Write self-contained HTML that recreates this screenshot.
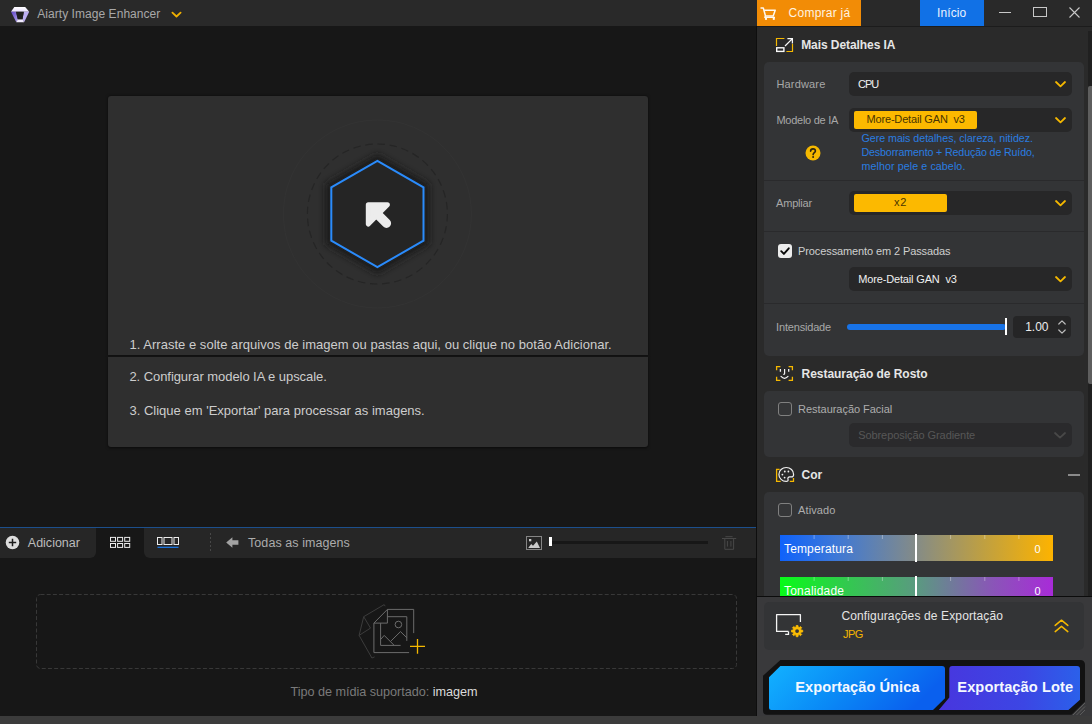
<!DOCTYPE html>
<html><head><meta charset="utf-8"><title>Aiarty Image Enhancer</title>
<style>
*{margin:0;padding:0;box-sizing:border-box}
html,body{width:1092px;height:724px;overflow:hidden;background:#171717;font-family:"Liberation Sans",sans-serif}
body{position:relative}
.a{position:absolute}
.t{position:absolute;white-space:nowrap;font-family:"Liberation Sans",sans-serif}
.card{position:absolute;left:764px;width:320px;background:#333436;border-radius:5px}
.dd{position:absolute;left:849px;width:223px;height:24px;background:#272728;border-radius:5px}
.sep{position:absolute;left:764px;width:320px;height:1px;background:#2a2a2c}
svg{position:absolute;overflow:visible}

</style></head>
<body>
<!-- title bar -->
<div class="a" style="left:0;top:0;width:1092px;height:26px;background:#292929"></div>
<!-- logo -->
<svg style="left:10px;top:6px" width="20" height="17" viewBox="0 0 20 17">
  <defs>
    <linearGradient id="lg1" x1="0" y1="0" x2="0" y2="1"><stop offset="0" stop-color="#ffffff"/><stop offset="1" stop-color="#e9e0ff"/></linearGradient>
    <linearGradient id="lg2" x1="0" y1="0" x2="1" y2="1"><stop offset="0" stop-color="#5d43c4"/><stop offset="1" stop-color="#b3a3ee"/></linearGradient>
  </defs>
  <path d="M4.300 1 H15.200 L19.200 5.800 H1 Z" fill="url(#lg1)"/>
  <path d="M1 5.800 H6 L7.800 13.300 L6.300 16.200 Z" fill="url(#lg2)"/>
  <path d="M19.200 5.800 H13.800 L12.500 13.300 L14.100 16.200 Z" fill="#bcaef2"/>
  <path d="M7.800 13.300 H12.500 L14.100 16.200 H6.300 Z" fill="#f1ebff"/>
  <path d="M6 5.800 H13.800 L12.500 13.300 H7.800 Z" fill="#1f1f1f"/>
</svg>
<!-- title chevron -->
<svg style="left:171px;top:11px" width="11" height="7" viewBox="0 0 11 7"><path d="M1.4 1.7 L5.5 5.5 L9.600 1.700" fill="none" stroke="#f0b000" stroke-width="1.8" stroke-linecap="round" stroke-linejoin="round"/></svg>
<!-- buy button -->
<div class="a" style="left:757px;top:0;width:104px;height:26px;background:#f28c06"></div>
<svg style="left:759.5px;top:6.5px" width="16" height="13" viewBox="0 0 16 13">
  <path d="M0.500 1 H3.300 L5.500 9 H13.200 L15.200 3.200 H4.200" fill="none" stroke="#fff8ee" stroke-width="1.500" stroke-linejoin="round"/>
  <path d="M5.500 9 L4.800 10.400 H15" fill="none" stroke="#fff8ee" stroke-width="1.400" stroke-linejoin="round"/>
  <circle cx="6" cy="11.900" r="1.150" fill="#fff8ee"/><circle cx="13.800" cy="11.900" r="1.150" fill="#fff8ee"/>
</svg>
<!-- inicio button -->
<div class="a" style="left:920px;top:0;width:64px;height:26px;background:#1171e6"></div>
<!-- window controls -->
<div class="a" style="left:999px;top:12px;width:12px;height:1px;background:#c8c8c8"></div>
<div class="a" style="left:1033px;top:7px;width:14px;height:10px;border:1px solid #c8c8c8"></div>
<svg style="left:1069px;top:7px" width="11" height="11" viewBox="0 0 11 11"><path d="M0.5 0.5 L10.5 10.5 M10.5 0.5 L0.5 10.5" stroke="#c8c8c8" stroke-width="1.1" fill="none"/></svg>

<!-- right panel -->
<div class="a" style="left:757px;top:26px;width:335px;height:690px;background:#2a2a2a"></div>
<div class="a" style="left:757px;top:26px;width:335px;height:1px;background:#1c1c1c"></div>
<div class="a" style="left:756px;top:26px;width:1px;height:690px;background:#0e0e0e;z-index:4"></div>
<!-- scrollbar -->
<div class="a" style="left:1087.5px;top:31px;width:4.5px;height:565px;background:#202020"></div>
<div class="a" style="left:1088px;top:86px;width:4px;height:297.500px;background:#5e5e5e;border-radius:2px 0 0 2px"></div>

<div class="card" style="top:62px;height:294px"></div>
<div class="card" style="top:391px;height:66px"></div>
<div class="card" style="top:492px;height:110px"></div>

<div class="dd" style="top:72px"></div>
<div class="dd" style="top:108px"></div>
<div class="dd" style="top:191px"></div>
<div class="dd" style="top:267px"></div>
<div class="dd" style="top:423px;background:#2a2a2c"></div>
<div class="sep" style="top:180px"></div>
<div class="sep" style="top:231px"></div>
<div class="sep" style="top:303px"></div>

<!-- yellow chips -->
<div class="a" style="left:854px;top:111px;width:123px;height:18px;background:#fcb900;border-radius:2px"></div>
<div class="a" style="left:854px;top:194px;width:93px;height:18px;background:#fcb900;border-radius:2px"></div>

<!-- bottom bar -->
<div class="a" style="left:0;top:716px;width:1092px;height:8px;background:#3b3b3b;z-index:4"></div>
<!-- chevrons in dropdowns -->
<svg style="left:1055px;top:81px" width="11" height="7" viewBox="0 0 11 7"><path d="M1 1 L5.5 5.3 L10 1" fill="none" stroke="#f5b800" stroke-width="1.8" stroke-linecap="round" stroke-linejoin="round"/></svg>
<svg style="left:1055px;top:117px" width="11" height="7" viewBox="0 0 11 7"><path d="M1 1 L5.5 5.3 L10 1" fill="none" stroke="#f5b800" stroke-width="1.8" stroke-linecap="round" stroke-linejoin="round"/></svg>
<svg style="left:1055px;top:200px" width="11" height="7" viewBox="0 0 11 7"><path d="M1 1 L5.5 5.3 L10 1" fill="none" stroke="#f5b800" stroke-width="1.8" stroke-linecap="round" stroke-linejoin="round"/></svg>
<svg style="left:1055px;top:276px" width="11" height="7" viewBox="0 0 11 7"><path d="M1 1 L5.5 5.3 L10 1" fill="none" stroke="#f5b800" stroke-width="1.8" stroke-linecap="round" stroke-linejoin="round"/></svg>
<svg style="left:1054px;top:432px" width="12" height="7" viewBox="0 0 12 7"><path d="M1 1 L6 5.6 L11 1" fill="none" stroke="#484848" stroke-width="1.8" stroke-linecap="round" stroke-linejoin="round"/></svg>

<!-- section icon 1: Mais Detalhes IA -->
<svg style="left:776px;top:38px" width="17" height="14" viewBox="0 0 17 14">
  <path d="M0.5 8 V0.5 H8.4" fill="none" stroke="#f5b800" stroke-width="1.2"/>
  <path d="M10.4 13.5 H16.5 V6" fill="none" stroke="#f5b800" stroke-width="1.2"/>
  <rect x="0.7" y="9.8" width="7.2" height="3.600" fill="none" stroke="#fafafa" stroke-width="1.400"/>
  <path d="M9 8 L16.2 0.9 M11.4 0.7 H16.4 V5.4" fill="none" stroke="#fafafa" stroke-width="1.250"/>
</svg>

<!-- help icon -->
<svg style="left:804.500px;top:145px" width="16" height="16" viewBox="0 0 16 16">
  <circle cx="8" cy="8" r="7.5" fill="#f5b800"/>
  <path d="M5.6 6.3 C5.6 4.6 6.8 3.9 8 3.9 C9.3 3.9 10.4 4.7 10.4 6 C10.4 7.6 8.2 7.8 8.1 9.6" fill="none" stroke="#2b2410" stroke-width="1.6" stroke-linecap="round"/>
  <circle cx="8.1" cy="12" r="1" fill="#2b2410"/>
</svg>

<!-- checkbox checked -->
<div class="a" style="left:778px;top:244px;width:14px;height:14px;background:#ececec;border-radius:3px"></div>
<svg style="left:778px;top:244px" width="14" height="14" viewBox="0 0 14 14"><path d="M3.2 7.2 L5.900 9.900 L10.800 4.300" fill="none" stroke="#0a0a0a" stroke-width="1.900" stroke-linecap="round" stroke-linejoin="round"/></svg>
<!-- unchecked -->
<div class="a" style="left:778px;top:402px;width:14px;height:14px;background:#353638;border:1px solid #808080;border-radius:3px"></div>
<div class="a" style="left:778px;top:503px;width:14px;height:14px;background:#353638;border:1px solid #808080;border-radius:3px"></div>

<!-- slider -->
<div class="a" style="left:847px;top:324px;width:159px;height:6px;background:#1873e8;border-radius:3px"></div>
<div class="a" style="left:1005px;top:318px;width:2px;height:17px;background:#fff"></div>
<div class="a" style="left:1013px;top:316px;width:58px;height:22px;background:#252526;border-radius:4px"></div>
<svg style="left:1058px;top:320px" width="8" height="14" viewBox="0 0 8 14"><path d="M0.8 4 L4 0.9 L7.2 4 M0.8 10 L4 13.1 L7.2 10" fill="none" stroke="#bdbdbd" stroke-width="1.2" stroke-linecap="round" stroke-linejoin="round"/></svg>

<!-- section icon 2: face -->
<svg style="left:776px;top:366px" width="17" height="15" viewBox="0 0 17 15">
  <path d="M0.6 4.2 V0.6 H4.400 M12.600 0.6 H16.400 V4.2 M16.400 10.800 V14.400 H12.600 M4.400 14.400 H0.6 V10.800" fill="none" stroke="#f5b800" stroke-width="1.300"/>
  <path d="M4.400 3 V5.800 M12.700 3 V5.800" fill="none" stroke="#f4f4f4" stroke-width="1.300"/>
  <path d="M8.600 3 V7.400 Q8.600 8.300 7.300 8.300" fill="none" stroke="#f4f4f4" stroke-width="1.200"/>
  <path d="M5 10.400 Q8.500 14.200 12 10.400" fill="none" stroke="#f4f4f4" stroke-width="1.200" stroke-linecap="round"/>
</svg>

<!-- section icon 3: palette -->
<svg style="left:776px;top:467px" width="18" height="15" viewBox="0 0 18 15">
  <path d="M3.600 2.300 H0.6 V14.300 H4.700" fill="none" stroke="#f5b800" stroke-width="1.300"/>
  <path d="M13.800 14.300 H17.500 V11.100" fill="none" stroke="#f5b800" stroke-width="1.300"/>
  <path d="M10.300 0.5 C6.200 0.5 2.900 3.500 2.900 7.400 C2.900 11.300 6.200 14.400 10.200 14.400 C11.800 14.400 12.400 13.500 12 12.300 C11.500 10.900 12.300 9.900 13.700 9.900 H15.500 C17 9.900 17.600 8.900 17.600 7.400 C17.600 3.500 14.400 0.5 10.300 0.5 Z" fill="none" stroke="#f0f0f0" stroke-width="1.200"/>
  <circle cx="8.800" cy="4.500" r="0.9" fill="#f0f0f0"/><circle cx="12.400" cy="4.500" r="0.9" fill="#f0f0f0"/><circle cx="6.400" cy="7.600" r="0.9" fill="#f0f0f0"/><circle cx="8.600" cy="10.600" r="0.9" fill="#f0f0f0"/>
</svg>
<!-- minus -->
<div class="a" style="left:1068px;top:474px;width:12px;height:2px;background:#8a8a8a"></div>

<!-- gradient bars -->
<div class="a" style="left:780px;top:535px;width:273px;height:26px;background:linear-gradient(90deg,#0f62fb 0%,#3d78d8 20%,#808a8c 48%,#c0a040 75%,#fdb300 100%)"></div>
<div class="a" style="left:780px;top:577px;width:273px;height:25px;background:linear-gradient(90deg,#08fb18 0%,#33c850 25%,#5a9a80 50%,#8a55b8 78%,#a82bd8 100%)"></div>
<svg style="left:780px;top:535px" width="273" height="50" viewBox="0 0 273 50">
  <path d="M34.1 0V4M68.2 0V4M102.4 0V4M170.6 0V4M204.8 0V4M238.9 0V4 M34.1 42V46M68.2 42V46M102.4 42V46M170.6 42V46M204.8 42V46M238.9 42V46" stroke="rgba(255,255,255,.35)" stroke-width="1" fill="none"/>
</svg>
<div class="a" style="left:914.800px;top:534px;width:2.600px;height:28px;background:#fff"></div>
<div class="a" style="left:914.800px;top:575.500px;width:2.600px;height:26px;background:#fff"></div>
<!-- export panel overlay -->
<div class="a" style="left:757px;top:596px;width:335px;height:128px;background:#39393b;z-index:3"></div>
<div class="a" style="left:757px;top:596px;width:335px;height:1px;background:#0c0c0c;z-index:3"></div>
<div class="a" style="left:764px;top:602px;width:320px;height:48px;background:#333436;border-radius:5px;z-index:3"></div>
<!-- export icon -->
<svg style="left:776px;top:614px;z-index:4" width="28" height="24" viewBox="0 0 28 24">
  <path d="M12.500 17.400 H0.6 V0.7 H24.400 V8" fill="none" stroke="#f4f4f4" stroke-width="1.300" stroke-linejoin="round"/>
  <path d="M12.500 17.400 V20.400 H9.200" fill="none" stroke="#f4f4f4" stroke-width="1.300"/>
  <path d="M20.10 13.12 L20.21 11.47 L21.99 11.47 L22.10 13.12 L23.21 13.58 L24.45 12.49 L25.71 13.75 L24.62 14.99 L25.08 16.10 L26.73 16.21 L26.73 17.99 L25.08 18.10 L24.62 19.21 L25.71 20.45 L24.45 21.71 L23.21 20.62 L22.10 21.08 L21.99 22.73 L20.21 22.73 L20.10 21.08 L18.99 20.62 L17.75 21.71 L16.49 20.45 L17.58 19.21 L17.12 18.10 L15.47 17.99 L15.47 16.21 L17.12 16.10 L17.58 14.99 L16.49 13.75 L17.75 12.49 L18.99 13.58 Z" fill="#fbbc04" stroke="#fbbc04" stroke-width="0.8" stroke-linejoin="round"/>
  <circle cx="21.100" cy="17.100" r="1.900" fill="#333436"/>
</svg>
<!-- double chevron up -->
<svg style="left:1054px;top:619px;z-index:4" width="15" height="14" viewBox="0 0 15 14"><path d="M1.2 6.4 L7.5 1.2 L13.8 6.4 M1.2 12.6 L7.5 7.4 L13.8 12.6" fill="none" stroke="#f5b800" stroke-width="1.5" stroke-linecap="round" stroke-linejoin="round"/></svg>
<!-- export buttons -->
<svg style="left:757px;top:656px;z-index:4" width="335" height="60" viewBox="0 0 335 60">
  <defs>
    <linearGradient id="gb1" x1="0" y1="0" x2="1" y2="0.25"><stop offset="0" stop-color="#12b2ff"/><stop offset="0.5" stop-color="#0a8af6"/><stop offset="1" stop-color="#0a60ee"/></linearGradient>
    <linearGradient id="gb2" x1="0" y1="0" x2="1" y2="0"><stop offset="0" stop-color="#4836de"/><stop offset="0.6" stop-color="#3c46e4"/><stop offset="1" stop-color="#2b60ea"/></linearGradient>
  </defs>
  <path d="M 23.4 4.0 H 323.0 Q 328.0 4.0 328.0 9.0 V 45.5 L 314.5 58.8 H 10.0 Q 6.0 58.8 6.0 54.8 V 19.7 Z" fill="#121212"/>
  <path d="M 23.4 10.0 H 185.0 Q 188.0 10.0 188.0 13.0 V 42.3 L 176.0 54.0 H 14.5 Q 12.0 54.0 12.0 51.5 V 21.3 Z" fill="url(#gb1)"/>
  <path d="M 195.3 10.0 H 320.0 Q 323.0 10.0 323.0 13.0 V 43.8 L 311.4 54.0 H 181.8 L 192.3 41.5 V 13.0 Q 192.3 10.0 195.3 10.0 Z" fill="url(#gb2)"/>
</svg>
<!-- resize grip -->
<svg style="left:1072px;top:702px;z-index:4" width="14" height="14" viewBox="0 0 14 14"><path d="M1 13 L13 1 M4.500 13 L13 4.500 M8 13 L13 8" stroke="#5c5c5c" stroke-width="1" fill="none"/></svg>

<!-- ===== left: drop cards ===== -->
<div class="a" style="left:108px;top:96px;width:540px;height:259px;background:#2f2f2f;border-radius:3px 3px 0 0;box-shadow:0 0 3px rgba(0,0,0,.6)"></div>
<div class="a" style="left:108px;top:357px;width:540px;height:90px;background:#2f2f2f;border-radius:0 0 3px 3px;box-shadow:0 1px 3px rgba(0,0,0,.6)"></div>
<!-- hexagon -->
<svg style="left:277px;top:114px" width="200" height="200" viewBox="0 0 200 200">
  <defs><filter id="sh" x="-30%" y="-30%" width="160%" height="160%"><feGaussianBlur stdDeviation="3"/></filter></defs>
  <circle cx="100.4" cy="100" r="94" fill="none" stroke="#333333" stroke-width="1"/>
  <circle cx="100.4" cy="100" r="70" fill="none" stroke="#252525" stroke-width="1.2" stroke-dasharray="7.5 4.7"/>
  <path d="M100.4 40 L152.400 70 V130 L100.4 160 L48.400 130 V70 Z" fill="#1a1a1a" filter="url(#sh)" opacity=".95"/>
  <path d="M100.4 46.8 L146.500 73.400 V126.600 L100.4 153.200 L54.300 126.600 V73.400 Z" fill="#252525" stroke="#2a8bfb" stroke-width="2" stroke-linejoin="miter"/>
  <path d="M91.300 90.700 H110.400 L91.300 110 Z" fill="#ececec" stroke="#ececec" stroke-width="5" stroke-linejoin="round"/>
  <path d="M101 100.800 L109.500 109.300" fill="none" stroke="#ececec" stroke-width="9.200" stroke-linecap="round"/>
</svg>

<!-- toolbar -->
<div class="a" style="left:0;top:527px;width:757px;height:1px;background:#1c4f8c"></div>
<div class="a" style="left:0;top:528px;width:756px;height:30px;background:#262626"></div>
<div class="a" style="left:96px;top:528px;width:48px;height:30px;background:#171717"></div>
<!-- tab curves -->
<div class="a" style="left:86px;top:548px;width:10px;height:10px;background:#171717"></div>
<div class="a" style="left:84px;top:546px;width:12px;height:12px;background:#262626;border-radius:0 0 6px 0"></div>
<div class="a" style="left:144px;top:548px;width:10px;height:10px;background:#171717"></div>
<div class="a" style="left:144px;top:546px;width:12px;height:12px;background:#262626;border-radius:0 0 0 6px"></div>
<!-- plus icon -->
<svg style="left:5px;top:535px" width="15" height="15" viewBox="0 0 15 15"><circle cx="7.5" cy="7.500" r="6.8" fill="#dedede"/><path d="M7.5 3.800 V11.200 M3.800 7.500 H11.200" stroke="#1c1c1c" stroke-width="1.5" fill="none"/></svg>
<!-- grid icon -->
<svg style="left:110px;top:537px" width="21" height="11" viewBox="0 0 21 11">
  <g fill="none" stroke="#ececec" stroke-width="1">
  <rect x="0.5" y="0.4" width="5" height="3.900"/><rect x="7.600" y="0.4" width="5" height="3.900"/><rect x="14.700" y="0.4" width="5" height="3.900"/>
  <rect x="0.5" y="6.500" width="5" height="3.900"/><rect x="7.600" y="6.500" width="5" height="3.900"/><rect x="14.700" y="6.500" width="5" height="3.900"/>
  </g>
</svg>
<!-- filmstrip icon -->
<svg style="left:157px;top:537px" width="22" height="11" viewBox="0 0 22 11">
  <g fill="none" stroke="#ececec" stroke-width="1">
  <rect x="0.5" y="0.5" width="4.500" height="7"/><rect x="7" y="0.5" width="8" height="7"/><rect x="17" y="0.5" width="4.500" height="7"/>
  </g>
  <path d="M0.500 10.300 H21.500" stroke="#1b7cf0" stroke-width="1.200"/>
</svg>
<!-- dashed separator -->
<div class="a" style="left:210px;top:533px;width:1px;height:19px;background:repeating-linear-gradient(180deg,#484848 0 2px,transparent 2px 4px)"></div>
<!-- back arrow -->
<svg style="left:226px;top:537px" width="13" height="11" viewBox="0 0 13 11"><path d="M0.2 5.500 L6.400 0.200 V3.200 H12.400 V7.800 H6.400 V10.800 Z" fill="#a2a2a2"/></svg>
<!-- image icon -->
<svg style="left:526px;top:536px" width="16" height="14" viewBox="0 0 16 14">
  <rect x="0.5" y="0.5" width="15" height="13" fill="none" stroke="#858585" stroke-width="1"/>
  <path d="M2.200 12 L5.200 8 L7 9.800 L10.800 5.600 L14 12 Z" fill="#cacaca"/>
  <rect x="3" y="3" width="2.300" height="2.300" fill="#cacaca"/>
</svg>
<!-- zoom slider -->
<div class="a" style="left:552px;top:541px;width:156px;height:3px;background:#171717"></div>
<div class="a" style="left:549px;top:537px;width:3px;height:9px;background:#fff"></div>
<!-- trash -->
<svg style="left:722px;top:536px" width="15" height="14" viewBox="0 0 15 14">
  <path d="M0 2.500 H14.200 M3.400 0.700 H10.600 M2.800 2.500 V13.300 H11.600 V2.500 M5.400 5 V10.600 M8.900 5 V10.600" fill="none" stroke="#484848" stroke-width="1"/>
</svg>

<!-- drop zone -->
<svg style="left:36px;top:594px" width="701" height="75" viewBox="0 0 701 75"><rect x="0.5" y="0.5" width="700" height="74" rx="4" fill="none" stroke="#383838" stroke-width="1" stroke-dasharray="4 2.2"/></svg>
<svg style="left:350px;top:598px" width="85" height="66" viewBox="0 0 85 66">
  <g fill="none" stroke="#3c3c3c" stroke-width="1">
    <path d="M35.100 8.200 L34.200 6.600 L13.700 18.700 L9.100 37.400 L21.900 60 L24.600 58.900"/>
    <path d="M13.700 18.700 L20.500 30.100 L9.100 37.400"/>
  </g>
  <g fill="none" stroke="#6c6c6c" stroke-width="1">
    <path d="M23.900 25.100 L37.400 11.400 H63.700 V35.100"/>
    <path d="M37.400 11.400 V25.100 H23.900 V54.600 H59.100"/>
    <path d="M37.400 18.700 H56.800 V42.900"/>
    <path d="M30.600 25.100 V47.400 H50.600"/>
    <path d="M30.600 41.500 L34.200 37.400 L43.800 47"/>
    <path d="M41.100 42.900 L50.500 33.600 L56.800 39.700"/>
    <circle cx="48.400" cy="26.500" r="3.300"/>
  </g>
  <path d="M60 48.400 H75 M67.500 41 V55.800" stroke="#f5b800" stroke-width="1.300" fill="none"/>
</svg>

<span class="t" id="t0" style="left:37.2px;top:6.84px;font-size:12px;line-height:14px;color:#a8a8a8;font-weight:400;letter-spacing:0.055px;">Aiarty Image Enhancer</span>
<span class="t" id="t1" style="left:788.6px;top:5.64px;font-size:12px;line-height:14px;color:#fff3e0;font-weight:400;letter-spacing:0.246px;">Comprar já</span>
<span class="t" id="t2" style="left:937.0px;top:6.04px;font-size:12px;line-height:14px;color:#eaf2ff;font-weight:400;letter-spacing:0.122px;">Início</span>
<span class="t" id="t3" style="left:801.2px;top:37.54px;font-size:12px;line-height:14px;color:#e6e6e6;font-weight:700;letter-spacing:-0.072px;">Mais Detalhes IA</span>
<span class="t" id="t4" style="left:776.4px;top:77.99px;font-size:11px;line-height:13px;color:#a8a8a8;font-weight:400;letter-spacing:0.172px;">Hardware</span>
<span class="t" id="t5" style="left:858.0px;top:77.89px;font-size:11px;line-height:13px;color:#f0f0f0;font-weight:400;letter-spacing:-1.025px;">CPU</span>
<span class="t" id="t6" style="left:776.4px;top:114.49px;font-size:11px;line-height:13px;color:#a8a8a8;font-weight:400;letter-spacing:-0.256px;">Modelo de IA</span>
<span class="t" id="t7" style="left:866.5px;top:113.49px;font-size:11px;line-height:13px;color:#4a3500;font-weight:400;letter-spacing:-0.170px;">More-Detail GAN&nbsp; v3</span>
<span class="t" id="t8" style="left:861.5px;top:132.00px;font-size:10.67px;line-height:13px;color:#2a7de1;font-weight:400;letter-spacing:-0.025px;">Gere mais detalhes, clareza, nitidez.</span>
<span class="t" id="t9" style="left:861.5px;top:145.80px;font-size:10.67px;line-height:13px;color:#2a7de1;font-weight:400;letter-spacing:-0.130px;">Desborramento + Redução de Ruído,</span>
<span class="t" id="t10" style="left:861.5px;top:159.70px;font-size:10.67px;line-height:13px;color:#2a7de1;font-weight:400;letter-spacing:0.098px;">melhor pele e cabelo.</span>
<span class="t" id="t11" style="left:776.1px;top:196.89px;font-size:11px;line-height:13px;color:#a8a8a8;font-weight:400;letter-spacing:-0.205px;">Ampliar</span>
<span class="t" id="t12" style="left:894.0px;top:196.09px;font-size:11px;line-height:13px;color:#4a3500;font-weight:400;letter-spacing:0.667px;">x2</span>
<span class="t" id="t13" style="left:798.1px;top:245.29px;font-size:11px;line-height:13px;color:#cfcfcf;font-weight:400;letter-spacing:-0.113px;">Processamento em 2 Passadas</span>
<span class="t" id="t14" style="left:858.2px;top:272.89px;font-size:11px;line-height:13px;color:#f0f0f0;font-weight:400;letter-spacing:-0.154px;">More-Detail GAN&nbsp; v3</span>
<span class="t" id="t15" style="left:776.1px;top:321.29px;font-size:11px;line-height:13px;color:#a8a8a8;font-weight:400;letter-spacing:-0.185px;">Intensidade</span>
<span class="t" id="t16" style="left:1025.2px;top:319.64px;font-size:12px;line-height:14px;color:#ececec;font-weight:400;letter-spacing:-0.010px;">1.00</span>
<span class="t" id="t17" style="left:801.6px;top:367.34px;font-size:12px;line-height:14px;color:#e6e6e6;font-weight:700;letter-spacing:-0.039px;">Restauração de Rosto</span>
<span class="t" id="t18" style="left:798.1px;top:403.09px;font-size:11px;line-height:13px;color:#adadad;font-weight:400;letter-spacing:-0.035px;">Restauração Facial</span>
<span class="t" id="t19" style="left:858.2px;top:428.69px;font-size:11px;line-height:13px;color:#575757;font-weight:400;letter-spacing:-0.076px;">Sobreposição Gradiente</span>
<span class="t" id="t20" style="left:801.6px;top:468.34px;font-size:12px;line-height:14px;color:#e6e6e6;font-weight:700;letter-spacing:0.016px;">Cor</span>
<span class="t" id="t21" style="left:798.1px;top:503.69px;font-size:11px;line-height:13px;color:#adadad;font-weight:400;letter-spacing:0.080px;">Ativado</span>
<span class="t" id="t22" style="left:784.0px;top:541.64px;font-size:12px;line-height:14px;color:#ffffff;font-weight:400;letter-spacing:0.150px;">Temperatura</span>
<span class="t" id="t23" style="left:1034.6px;top:543.29px;font-size:11px;line-height:13px;color:#ffffff;font-weight:400;letter-spacing:0.135px;">0</span>
<span class="t" id="t24" style="left:784.0px;top:584.14px;font-size:12px;line-height:14px;color:#ffffff;font-weight:400;letter-spacing:0.216px;">Tonalidade</span>
<span class="t" id="t25" style="left:1034.6px;top:585.29px;font-size:11px;line-height:13px;color:#ffffff;font-weight:400;letter-spacing:0.135px;">0</span>
<span class="t" id="t26" style="left:841.4px;top:608.64px;font-size:12px;line-height:14px;color:#e4e4e4;font-weight:400;letter-spacing:0.134px;z-index:5">Configurações de Exportação</span>
<span class="t" id="t27" style="left:842.9px;top:627.59px;font-size:11px;line-height:13px;color:#f5b400;font-weight:400;letter-spacing:-0.482px;z-index:5">JPG</span>
<span class="t" id="t28" style="left:795.3px;top:678.42px;font-size:14.67px;line-height:18px;color:#f4f8ff;font-weight:700;letter-spacing:0.029px;z-index:5">Exportação Única</span>
<span class="t" id="t29" style="left:957.3px;top:678.42px;font-size:14.67px;line-height:18px;color:#f4f8ff;font-weight:700;letter-spacing:0.069px;z-index:5">Exportação Lote</span>
<span class="t" id="t30" style="left:129.4px;top:336.80px;font-size:13px;line-height:16px;color:#cdcdcd;font-weight:400;letter-spacing:0.030px;">1. Arraste e solte arquivos de imagem ou pastas aqui, ou clique no botão Adicionar.</span>
<span class="t" id="t31" style="left:129.4px;top:368.50px;font-size:13px;line-height:16px;color:#cdcdcd;font-weight:400;letter-spacing:-0.061px;">2. Configurar modelo IA e upscale.</span>
<span class="t" id="t32" style="left:129.4px;top:402.80px;font-size:13px;line-height:16px;color:#cdcdcd;font-weight:400;letter-spacing:0.013px;">3. Clique em 'Exportar' para processar as imagens.</span>
<span class="t" id="t33" style="left:27.8px;top:536.37px;font-size:12.5px;line-height:15px;color:#bcbcbc;font-weight:400;letter-spacing:0.003px;">Adicionar</span>
<span class="t" id="t34" style="left:248.0px;top:536.37px;font-size:12.5px;line-height:15px;color:#acacac;font-weight:400;letter-spacing:0.074px;">Todas as imagens</span>
<span class="t" id="t35" style="left:290.5px;top:684.81px;font-size:12.67px;line-height:15px;color:#dcdcdc;font-weight:400;letter-spacing:-0.036px;"><span style="color:#7a7a7a">Tipo de mídia suportado:</span> imagem</span>
</body></html>
